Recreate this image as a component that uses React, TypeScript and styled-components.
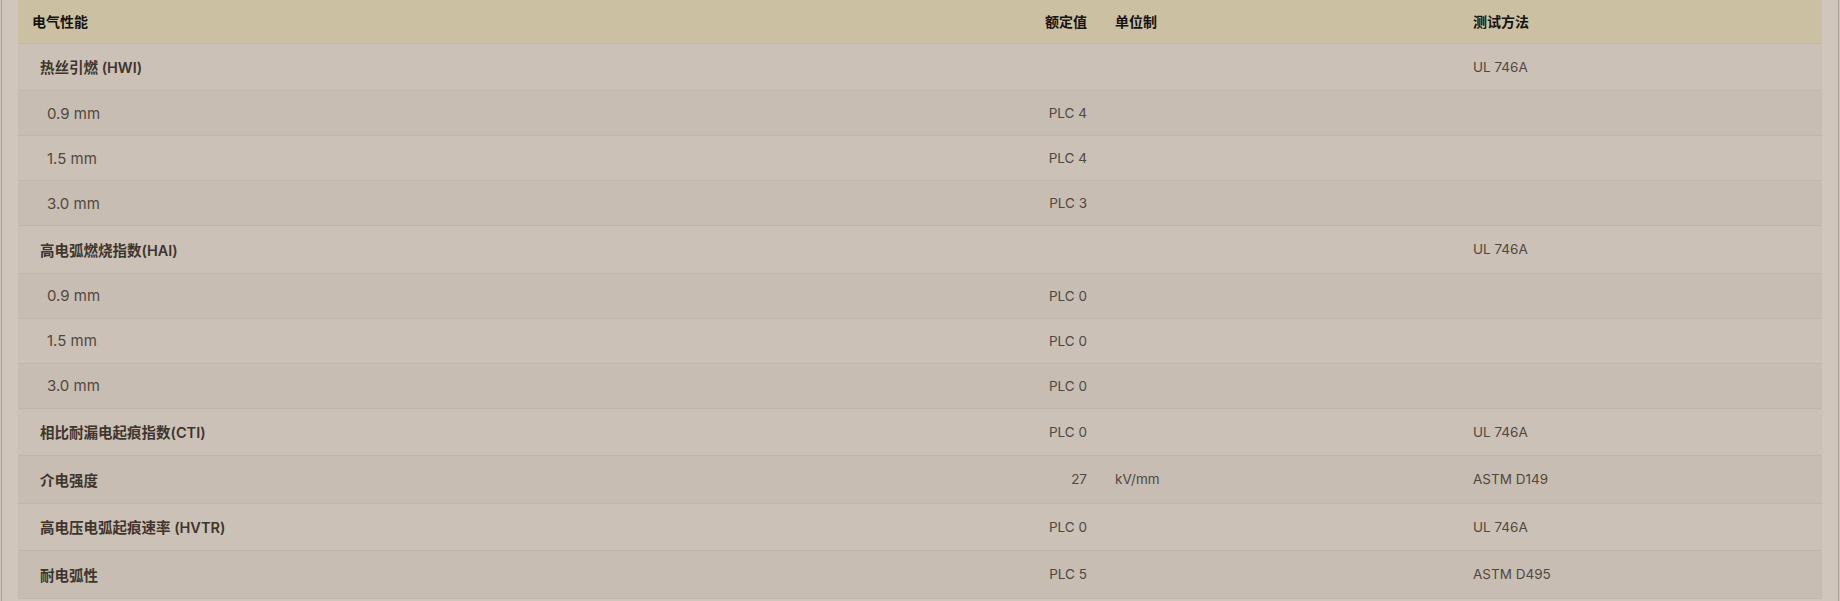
import React from "react";
import styled, { createGlobalStyle } from "styled-components";

const Global = createGlobalStyle`
  html, body { margin: 0; padding: 0; background: #d0c6bc; }
  body { font-family: Inter, "Noto Sans CJK SC", sans-serif; }
`;

const Frame = styled.div`
  margin: 0 1px;
  border-left: 1px solid #a9a097;
  border-right: 1px solid #a9a097;
  padding: 0 16px;
  background: #d0c6bc;
  min-height: 601px;
  box-sizing: border-box;
`;

const Table = styled.div`
  display: flex;
  flex-direction: column;
`;

const cols = "minmax(0, 1fr) 160px 358px 363px";

const HeadRow = styled.div`
  display: grid;
  grid-template-columns: ${cols};
  height: 43.5px;
  align-items: center;
  background: #cbc1a2;
  border-bottom: 1px solid #c3b99c;
  box-sizing: border-box;
`;

const HeadCell = styled.div<{ $right?: boolean }>`
  padding: 0 14px;
  text-align: ${(p) => (p.$right ? "right" : "left")};
  font-family: "Noto Sans CJK SC", sans-serif;
  font-weight: 700;
  font-size: 14px;
  color: #151310;
`;

const Row = styled.div<{ $kind: "group" | "sub"; $odd: boolean }>`
  display: grid;
  grid-template-columns: ${cols};
  height: ${(p) => (p.$kind === "group" ? "47.5px" : "45px")};
  align-items: center;
  background: ${(p) => (p.$odd ? "#cbc1b7" : "#c7bdb3")};
  border-bottom: 1px solid #c0b6ac;
  box-sizing: border-box;
`;

const NameCell = styled.div<{ $kind: "group" | "sub" }>`
  padding-left: ${(p) => (p.$kind === "group" ? "22px" : "29px")};
  font-family: Inter, "Noto Sans CJK SC", sans-serif;
  font-size: ${(p) => (p.$kind === "group" ? "14.5px" : "15px")};
  font-weight: ${(p) => (p.$kind === "group" ? 600 : 400)};
  color: ${(p) => (p.$kind === "group" ? "#3e352d" : "#514840")};
  white-space: nowrap;
`;

const Cell = styled.div<{ $right?: boolean }>`
  padding: 0 14px;
  text-align: ${(p) => (p.$right ? "right" : "left")};
  font-family: Inter, "Noto Sans CJK SC", sans-serif;
  font-size: 13.5px;
  color: #514840;
  white-space: nowrap;
`;

type R = { kind: "group" | "sub"; name: string; value?: string; unit?: string; method?: string };

const rows: R[] = [
  { kind: "group", name: "热丝引燃 (HWI)", method: "UL 746A" },
  { kind: "sub", name: "0.9 mm", value: "PLC 4" },
  { kind: "sub", name: "1.5 mm", value: "PLC 4" },
  { kind: "sub", name: "3.0 mm", value: "PLC 3" },
  { kind: "group", name: "高电弧燃烧指数(HAI)", method: "UL 746A" },
  { kind: "sub", name: "0.9 mm", value: "PLC 0" },
  { kind: "sub", name: "1.5 mm", value: "PLC 0" },
  { kind: "sub", name: "3.0 mm", value: "PLC 0" },
  { kind: "group", name: "相比耐漏电起痕指数(CTI)", value: "PLC 0", method: "UL 746A" },
  { kind: "group", name: "介电强度", value: "27", unit: "kV/mm", method: "ASTM D149" },
  { kind: "group", name: "高电压电弧起痕速率 (HVTR)", value: "PLC 0", method: "UL 746A" },
  { kind: "group", name: "耐电弧性", value: "PLC 5", method: "ASTM D495" },
];

export default function App() {
  return (
    <>
      <Global />
      <Frame>
        <Table>
          <HeadRow>
            <HeadCell>电气性能</HeadCell>
            <HeadCell $right>额定值</HeadCell>
            <HeadCell>单位制</HeadCell>
            <HeadCell>测试方法</HeadCell>
          </HeadRow>
          {rows.map((r, i) => (
            <Row key={i} $kind={r.kind} $odd={i % 2 === 0}>
              <NameCell $kind={r.kind}>{r.name}</NameCell>
              <Cell $right>{r.value ?? ""}</Cell>
              <Cell>{r.unit ?? ""}</Cell>
              <Cell>{r.method ?? ""}</Cell>
            </Row>
          ))}
        </Table>
      </Frame>
    </>
  );
}
